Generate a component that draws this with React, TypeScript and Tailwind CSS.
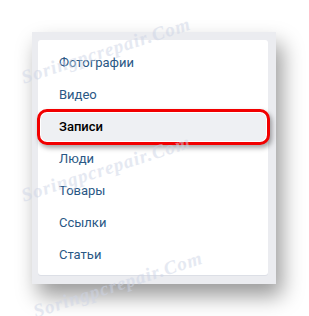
const items = ["Фотографии", "Видео", "Записи", "Люди", "Товары", "Ссылки", "Статьи"];

const watermarks = [
  { top: "top-[64px]", left: "left-[22px]" },
  { top: "top-[182px]", left: "left-[22px]" },
  { top: "top-[298px]", left: "left-[34px]" },
];

export default function App() {
  return (
    <div className="relative w-[309px] h-[316px] overflow-hidden bg-white font-['Roboto',sans-serif]">
      <div className="pl-[32px] pt-[32px]">
        {/* outer frame */}
        <div className="w-[244px] h-[252px] bg-[#ebecf0] pl-[6px] pr-[8px] pt-[8px] shadow-[6px_12px_20px_rgba(0,0,0,0.4)]">
          {/* menu card */}
          <div className="h-[235px] bg-white rounded-[3px] pt-[7px] shadow-[0_1px_0_#dcdfe6]">
            {items.map((label) => {
              const active = label === "Записи";
              return (
                <div key={label} className="relative h-8 flex items-center">
                  {active && (
                    <span className="absolute -left-[1px] -right-[2px] -top-[2px] -bottom-[2px] rounded-[10px] border-[3px] border-[#f20000] bg-[#eef0f3] shadow-[2px_3px_5px_rgba(0,0,0,0.35),inset_0_0_0_1px_#ffffff]" />
                  )}
                  <span
                    className={
                      active
                        ? "relative pl-[21px] text-[13px] font-medium text-black"
                        : "relative pl-[21px] text-[13px] text-[#2a5885]"
                    }
                  >
                    {label}
                  </span>
                </div>
              );
            })}
          </div>
        </div>
      </div>

      {/* watermark */}
      {watermarks.map((w, i) => (
        <span
          key={i}
          className={`absolute ${w.top} ${w.left} origin-left -rotate-[18deg] whitespace-nowrap font-['Liberation_Serif',serif] italic font-bold text-[19px] tracking-[1px] text-[#cdd4e6] opacity-50 pointer-events-none`}
        >
          Soringpcrepair.Com
        </span>
      ))}
    </div>
  );
}
